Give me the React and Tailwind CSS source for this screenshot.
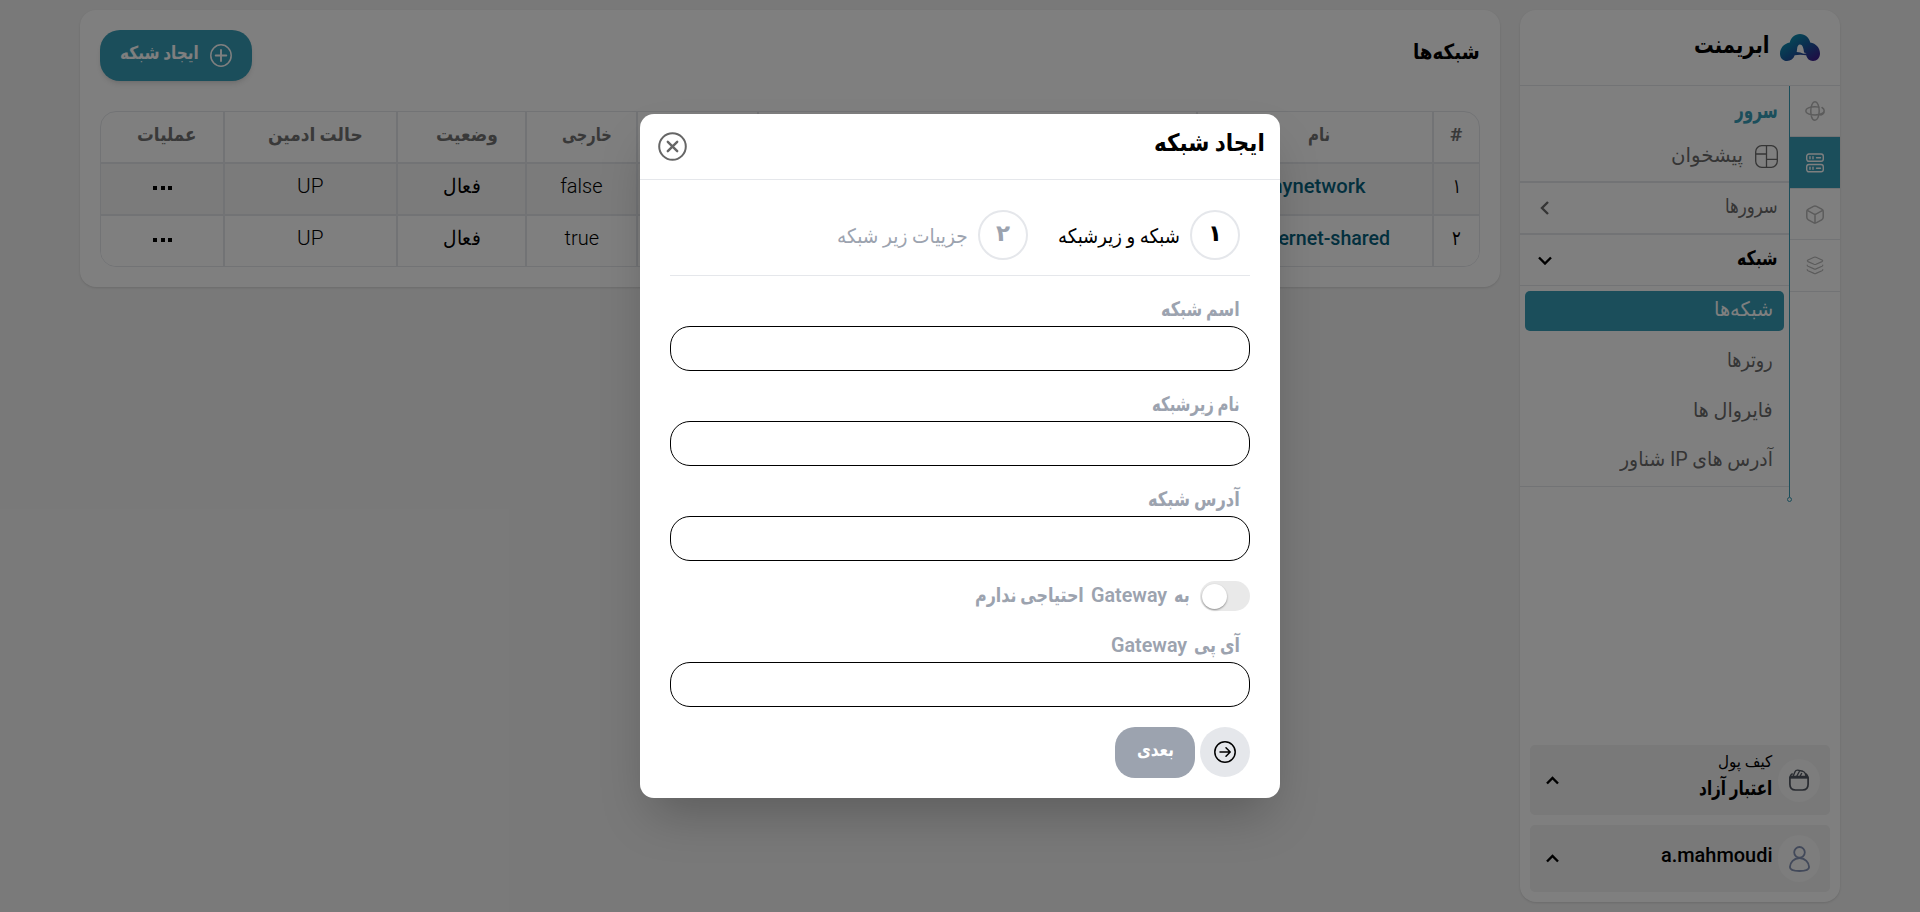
import { useLayoutEffect, useRef, useState } from "react";

// Text condensed horizontally so that it takes exactly `w` pixels.
function Fit({ w, className = "", children }) {
  const ref = useRef(null);
  const [scale, setScale] = useState(1);
  useLayoutEffect(() => {
    setScale(w / ref.current.offsetWidth);
  }, [w]);
  return (
    <span className={`flex shrink-0 justify-start ${className}`} style={{ width: w }}>
      <span
        ref={ref}
        className="block shrink-0 origin-right whitespace-nowrap"
        style={{ transform: `scaleX(${scale})` }}
      >
        {children}
      </span>
    </span>
  );
}

function Logo() {
  return (
    <svg width="40" height="27" viewBox="0 0 40 27">
      <defs>
        <linearGradient id="lg" x1="0.2" y1="0" x2="1" y2="0.8">
          <stop offset="0" stopColor="#0a9bb2" />
          <stop offset="0.5" stopColor="#1560a0" />
          <stop offset="1" stopColor="#3a1f8c" />
        </linearGradient>
      </defs>
      <path
        fill="url(#lg)"
        fillRule="evenodd"
        d="M20 0c5.300 0 9.300 3.600 10.200 8.600C36 9.600 40 14 40 19.500 40 24 37 27 33 27c-3.500 0-6-2.200-6.800-5.700-3.700-.8-8.200-.8-11.500 0C13.500 25 10.600 27 7 27c-4 0-7-3-7-7.300C0 14.200 4 9.600 9.800 8.600 10.700 3.600 14.700 0 20 0zM20 10.500c-1.700 0-2.700 1.800-2.900 4.400l-.4 3c2.600.2 4.800.8 7.300 1.800l2.600-.4-2.600-.8c-.4-4.700-1.600-8-4-8z"
      />
    </svg>
  );
}

function Orbit() {
  return (
    <svg width="20" height="20" viewBox="0 0 20 20" fill="none" stroke="currentColor" strokeWidth="1.500" strokeLinecap="round">
      <path d="M6.400 15.500 C7 17.700 8.300 19.200 10 19.200 c2.500 0 4.200-4 4.200-9.200 S12.500.8 10 .8 5.800 4.800 5.800 10c0 1.500.1 2.700.4 3.900" />
      <path d="M15.800 14.100C17.900 13.300 19.200 12 19.200 10.400M17 6.500c1.400.8 2.200 1.900 2.200 3.200 0 2.500-4 4.300-9.200 4.300S.8 12.300.8 9.900 4.800 5.700 10 5.700c1.400 0 2.700.1 3.800.4" />
    </svg>
  );
}

function Servers() {
  return (
    <svg width="18" height="20" viewBox="0 0 18 20" fill="none" stroke="currentColor" strokeWidth="1.400" strokeLinecap="round">
      <rect x="0.700" y="1" width="16.600" height="7.300" rx="2.200" />
      <rect x="0.700" y="11.500" width="16.600" height="7.300" rx="2.200" />
      <path d="M4 3.600v2.200M7 3.600v2.200M10.500 4.700h4M4 14.100v2.200M7 14.100v2.200M10.500 15.200h4" />
    </svg>
  );
}

function Cube() {
  return (
    <svg width="18" height="19" viewBox="0 0 18 19" fill="none" stroke="currentColor" strokeWidth="1.500" strokeLinejoin="round" strokeLinecap="round">
      <path d="M7.500 1.300 2.300 4.200Q.8 5 .8 6.700v5.600q0 1.700 1.500 2.500l5.200 2.900q1.500.8 3 0l5.200-2.900q1.500-.8 1.500-2.500V6.700q0-1.700-1.500-2.500L10.500 1.300q-1.500-.8-3 0z" />
      <path d="M1.300 5.400 9 9.600l7.700-4.200M9 9.600v8.500" />
    </svg>
  );
}

function Layers() {
  return (
    <svg width="18" height="19" viewBox="0 0 18 19" fill="none" stroke="currentColor" strokeWidth="1.200" strokeLinejoin="round" strokeLinecap="round">
      <path d="M8 1.300 2 4q-1.300.8 0 1.600l6 2.700q1 .4 2 0l6-2.700q1.300-.8 0-1.600l-6-2.700q-1-.4-2 0z" />
      <path d="M1.200 9Q1.200 9.800 2 10.200l6 2.700q1 .4 2 0l6-2.700q.8-.4.8-1.200M1.200 13.500q0 .8.800 1.200l6 2.700q1 .4 2 0l6-2.700q.8-.4.8-1.200" />
    </svg>
  );
}

function Dashboard() {
  return (
    <svg width="23" height="23" viewBox="0 0 23 23" fill="none" stroke="currentColor" strokeWidth="1.300">
      <rect x="0.700" y="0.700" width="21.600" height="21.600" rx="6" />
      <path d="M11.500.7v21.600M.7 9h10.800M11.500 14.300h10.800" />
    </svg>
  );
}

function Chevron({ className, d, w, h }) {
  return (
    <svg className={className} width={w} height={h} viewBox={`0 0 ${w} ${h}`} fill="none" stroke="currentColor" strokeWidth="2.400">
      <path d={d} />
    </svg>
  );
}

function Wallet() {
  return (
    <svg width="20" height="22" viewBox="0 0 20 22" fill="none" stroke="currentColor" strokeWidth="1.700" strokeLinejoin="round">
      <path d="M.9 9v6.300q0 5.700 5.600 5.700h7q5.600 0 5.600-5.700V9q0-1.300-1.300-1.300H2.200Q.9 7.700.9 9z" />
      <path d="M.9 8.800h18.200" />
      <path d="M1 9Q1 5.800 3.700 4.600M19 9q0-3-2.300-4.400M4 7.500l2-4.700Q6.800 1 8.700 1.100l5.200 1.200Q15.600 2.800 16.200 4.400l.9 3M7.600 7.500l3-5.500M11 7.500 12.800 4" strokeWidth="1.400" />
    </svg>
  );
}

function Person() {
  return (
    <svg width="21" height="26" viewBox="0 0 21 26" fill="none" stroke="currentColor" strokeWidth="1.800">
      <circle cx="10.500" cy="6.300" r="5.300" />
      <path d="M10.500 12c-5.500 0-9.600 4.500-9.600 9 0 2.600 4 4 9.600 4s9.600-1.400 9.600-4c0-4.500-4.100-9-9.600-9z" />
    </svg>
  );
}

const columns = ["w-[46px]", "w-[236px]", "w-[439px]", "w-[121px]", "w-[111px]", "w-[129px]", "w-[173px]", "w-[123px]"];

function Row({ cells, className }) {
  return (
    <div className={`flex shrink-0 ${className}`}>
      {cells.map((cell, i) => (
        <div
          key={i}
          className={`flex shrink-0 items-center justify-center border-gray-200 ${columns[i]} ${
            i === 0 ? "border-l" : i === 7 ? "border-r" : "border-x"
          }`}
        >
          {cell}
        </div>
      ))}
    </div>
  );
}

const head = "text-[19px] leading-7 font-bold text-[#737373] -mt-1";
const data = "text-[20px] leading-7 font-light text-black -mt-[6px]";
const link = "text-[20px] leading-7 font-medium text-[#06607d] -mt-[6px]";

function Dots() {
  return (
    <div className="flex gap-[3.500px] ml-px -mt-[2px]">
      <i className="size-1 bg-black" />
      <i className="size-1 bg-black" />
      <i className="size-1 bg-black" />
    </div>
  );
}

function Field({ label, w, latin }) {
  return (
    <div className="flex flex-col">
      <div className="flex h-[33px] items-center gap-[7px] pr-[10px] text-[#9ca3af]">
        <Fit w={w} className="text-[20px] leading-7 font-bold -mt-[2px]">
          {label}
        </Fit>
        {latin && (
          <Fit w={76} className="text-[20px] leading-7 font-semibold -mt-[2px]">
            {latin}
          </Fit>
        )}
      </div>
      <input className="h-[45px] w-full rounded-[20px] border border-black bg-white px-4 outline-none" />
    </div>
  );
}

function Sidebar() {
  return (
    <aside className="flex h-[892px] w-[320px] flex-col rounded-[16px] bg-white shadow">
      <div className="flex h-[76px] shrink-0 items-start gap-[11px] border-b border-gray-200 pt-6 pr-5">
        <Logo />
        <Fit w={75} className="text-[24px] leading-7 font-bold text-black -mt-[3px]">
          ابریمنت
        </Fit>
      </div>
      <div className="flex flex-1">
        <nav className="flex w-[50px] flex-col text-[#b8b8b8]">
          <div className="flex h-[51px] items-center justify-center border-b border-gray-200"><Orbit /></div>
          <div className="flex h-[52px] items-center justify-center border-b border-gray-200 bg-[#369cb6] text-white"><Servers /></div>
          <div className="flex h-[51px] items-center justify-center border-b border-gray-200"><Cube /></div>
          <div className="flex h-[52px] items-center justify-center border-b border-gray-200"><Layers /></div>
        </nav>
        <div className="relative flex h-[411px] w-[270px] flex-col border-r border-[#369cb6]">
          <span className="absolute -right-[3px] -bottom-[5px] size-[5px] rounded-full border border-[#369cb6]" />
          <div className="flex h-[97px] flex-col border-b-2 border-gray-200 pt-[11px] pr-[11px]">
            <Fit w={43} className="text-[22px] leading-7 font-bold text-[#369cb6]">سرور</Fit>
            <div className="mt-[9px] flex gap-3 text-[#6b6b6b]">
              <span className="mt-[11px]"><Dashboard /></span>
              <Fit w={72} className="text-[20px] leading-7 mt-[7px]">پیشخوان</Fit>
            </div>
          </div>
          <div className="flex h-[52px] items-center justify-between border-b-2 border-gray-200 pr-[11px] pl-5 text-[#6b6b6b]">
            <Fit w={53} className="text-[20px] leading-7 -mt-[4px]">سرورها</Fit>
            <Chevron w={9} h={14} d="M8 1 2 7l6 6" />
          </div>
          <div className="flex h-[51px] items-center justify-between border-b border-gray-200 pr-[11px] pl-[18px] text-black">
            <Fit w={41} className="text-[20px] leading-7 font-bold -mt-[4px]">شبکه</Fit>
            <Chevron w={14} h={9} d="M1 1.500 7 7.500l6-6" />
          </div>
          <div className="flex flex-col gap-[10px] border-b border-gray-200 py-[5px] pr-[5px] pl-[5px] text-[20px] leading-7 text-[#6b6b6b]">
            <div className="flex h-10 items-center rounded-[5px] bg-[#369cb6] pr-[11px] text-white"><Fit w={59} className="-mt-[4px]">شبکه‌ها</Fit></div>
            <div className="flex h-10 items-center pr-[11px]"><Fit w={46} className="-mt-[3px]">روترها</Fit></div>
            <div className="flex h-10 items-center pr-[11px]"><Fit w={80} className="-mt-[3px]">فایروال ها</Fit></div>
            <div className="flex h-10 items-center pr-[11px]"><Fit w={153} className="-mt-[4px]">آدرس های <span className="text-[21px]">IP</span> شناور</Fit></div>
          </div>
        </div>
      </div>
      <div className="flex flex-col gap-[10px] p-[10px]">
        <div className="flex h-[70px] items-center rounded-[5px] bg-[#f2f2f2] pr-[10px] pl-4">
          <span className="flex h-[43px] w-[42px] items-center justify-center rounded-full bg-white/60 text-[#505661]"><Wallet /></span>
          <div className="mr-[6px] flex flex-col text-black -mt-[8px]">
            <Fit w={54} className="text-[16px] leading-6">کیف پول</Fit>
            <Fit w={73} className="text-[20px] leading-7 font-bold">اعتبار آزاد</Fit>
          </div>
          <Chevron className="mr-auto" w={13} h={9} d="M1 7.500 6.500 2 12 7.500" />
        </div>
        <div className="flex h-[67px] items-center rounded-[5px] bg-[#f2f2f2] pr-[10px] pl-4">
          <span className="flex h-[47px] w-[42px] items-center justify-center rounded-full bg-white/60 text-[#8492b4]"><Person /></span>
          <Fit w={112} className="mr-[5px] text-[21px] leading-7 font-medium text-black -mt-2">a.mahmoudi</Fit>
          <Chevron className="mr-auto" w={13} h={9} d="M1 7.500 6.500 2 12 7.500" />
        </div>
      </div>
    </aside>
  );
}

function Networks() {
  return (
    <section className="flex h-[277px] w-[1420px] flex-col rounded-[16px] bg-white px-5 pt-5 shadow">
      <div className="flex h-[81px] items-start justify-between">
        <Fit w={67} className="text-[21px] leading-7 font-bold text-black mt-2">شبکه‌ها</Fit>
        <button className="flex h-[51px] w-[152px] items-center gap-[11px] rounded-[20px] bg-[#369cb6] pr-5 text-white shadow-md">
          <svg width="22" height="23" viewBox="0 0 22 23" fill="none" stroke="currentColor" strokeWidth="1.500" strokeLinecap="round">
            <ellipse cx="11" cy="11.500" rx="10.200" ry="10.700" />
            <path d="M11 6v11M5.700 11.500h10.600" strokeWidth="1.900" />
          </svg>
          <Fit w={79} className="text-[18px] leading-6 font-bold -mt-[6px]">ایجاد شبکه</Fit>
        </button>
      </div>
      <div className="flex h-[156px] flex-col overflow-hidden rounded-[16px] border border-gray-200">
        <Row
          className="h-[52px] border-b-2 border-gray-200"
          cells={[
            <Fit w={12} className={head}>#</Fit>,
            <Fit w={22} className={`${head} mr-[-8px]`}>نام</Fit>,
            null, null,
            <Fit w={50} className={`${head} mr-[-10px]`}>خارجی</Fit>,
            <Fit w={62} className={`${head} mr-[-10px]`}>وضعیت</Fit>,
            <Fit w={95} className={`${head} mr-[-10px]`}>حالت ادمین</Fit>,
            <Fit w={59} className={`${head} mr-[-9px]`}>عملیات</Fit>,
          ]}
        />
        <Row
          className="h-[52px] border-b-2 border-gray-200 bg-[#f6f6f6]"
          cells={[
            <Fit w={8} className={data}>۱</Fit>,
            <Fit w={100} className={link}>mynetwork</Fit>,
            null, null,
            <Fit w={42} className={data}>false</Fit>,
            <Fit w={38} className={data}>فعال</Fit>,
            <Fit w={26} className={data}>UP</Fit>,
            <Dots />,
          ]}
        />
        <Row
          className="h-[50px] bg-white"
          cells={[
            <Fit w={9} className={data}>۲</Fit>,
            <Fit w={134} className={`${link} mr-[-17px]`}>internet-shared</Fit>,
            null, null,
            <Fit w={35} className={data}>true</Fit>,
            <Fit w={38} className={data}>فعال</Fit>,
            <Fit w={26} className={data}>UP</Fit>,
            <Dots />,
          ]}
        />
      </div>
    </section>
  );
}

function Modal() {
  return (
    <div className="flex h-[684px] w-[640px] flex-col rounded-[14px] bg-white shadow-2xl">
      <div className="flex h-[66px] shrink-0 items-start justify-between border-b border-gray-200 pr-[15px] pl-[18px]">
        <Fit w={111} className="mt-[13px] text-[24px] leading-8 font-bold text-black">ایجاد شبکه</Fit>
        <svg className="mt-[18px]" width="29" height="29" viewBox="0 0 29 29" fill="none" stroke="#666" strokeWidth="2" strokeLinecap="round">
          <circle cx="14.500" cy="14.500" r="13.300" />
          <path d="m9.800 9.800 9.400 9.400M19.200 9.800l-9.400 9.400" strokeWidth="2.400" />
        </svg>
      </div>
      <div className="flex flex-col px-[30px]">
        <div className="flex h-24 items-start border-b border-gray-200 pt-[30px] pr-[10px]">
          <div className="flex size-[50px] justify-center rounded-full border-2 border-gray-200 text-[23px] leading-[44px] font-bold text-black">۱</div>
          <Fit w={122} className="mt-3 mr-[10px] text-[20px] leading-7 text-black">شبکه و زیرشبکه</Fit>
          <div className="mr-[30px] flex size-[50px] justify-center rounded-full border-2 border-gray-200 text-[23px] leading-[44px] font-bold text-[#9ca3af]">۲</div>
          <Fit w={131} className="mt-3 mr-[10px] text-[20px] leading-7 text-[#9ca3af]">جزییات زیر شبکه</Fit>
        </div>
        <div className="mt-[17px] flex flex-col gap-[17px]">
          <Field label="اسم شبکه" w={79} />
          <Field label="نام زیرشبکه" w={88} />
          <Field label="آدرس شبکه" w={92} />
        </div>
        <div className="mt-5 flex h-[30px] items-center">
          <span className="flex h-[30px] w-[50px] items-center justify-end rounded-full bg-[#e9e9e9] pl-[2px]">
            <span className="size-[25px] rounded-full bg-white shadow-[0_1px_2px_rgba(0,0,0,0.4)]" />
          </span>
          <div className="-mt-[3px] mr-[10px] flex gap-[7px] text-[20px] leading-7 font-bold text-[#9ca3af]">
            <Fit w={16}>به</Fit>
            <Fit w={76} className="font-semibold">Gateway</Fit>
            <Fit w={109}>احتیاجی ندارم</Fit>
          </div>
        </div>
        <div className="mt-[18px]">
          <Field label="آی پی" w={46} latin="Gateway" />
        </div>
        <div className="mt-5 flex items-start gap-[5px]">
          <button className="flex size-[50px] items-center justify-center rounded-full bg-gray-200">
            <svg width="22" height="22" viewBox="0 0 22 22" fill="none" stroke="#000" strokeWidth="1.500" strokeLinecap="round" strokeLinejoin="round">
              <circle cx="11" cy="11" r="10.200" />
              <path d="M6 11h10M12 6.800l4.200 4.200-4.200 4.200" />
            </svg>
          </button>
          <button className="flex h-[51px] w-20 items-center justify-center rounded-[20px] bg-[#9ca3af] text-white">
            <Fit w={37} className="text-[18px] leading-6 font-bold -mt-[6px]">بعدی</Fit>
          </button>
        </div>
      </div>
    </div>
  );
}

export default function App() {
  return (
    <div dir="rtl" className="relative h-[912px] w-[1920px] overflow-hidden bg-[#f3f3f3] font-[Roboto,'DejaVu_Sans',sans-serif]">
      <div className="flex items-start gap-5 pt-[10px] pr-20">
        <Sidebar />
        <Networks />
      </div>
      <div className="absolute inset-0 flex items-center justify-center bg-black/50">
        <Modal />
      </div>
    </div>
  );
}
